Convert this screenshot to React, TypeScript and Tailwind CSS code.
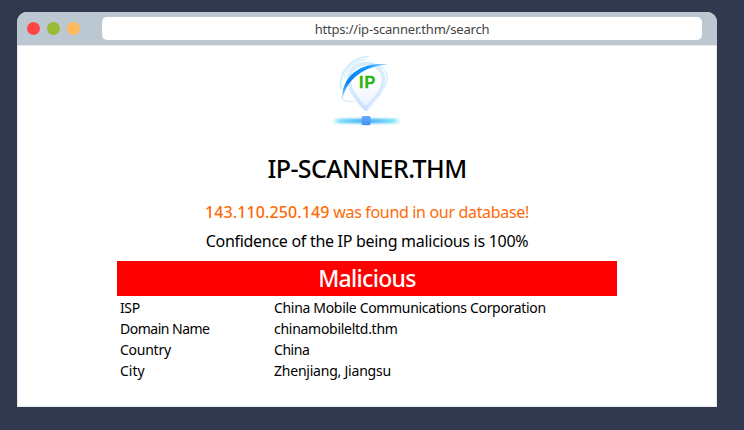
import React from 'react';

type Detail = { label: string; value: string; labelTracking: string; valueTracking: string };

const details: Detail[] = [
  { label: 'ISP', value: 'China Mobile Communications Corporation', labelTracking: 'tracking-[-0.4px]', valueTracking: 'tracking-[-0.32px]' },
  { label: 'Domain Name', value: 'chinamobileltd.thm', labelTracking: 'tracking-[-0.5px]', valueTracking: 'tracking-[-0.28px]' },
  { label: 'Country', value: 'China', labelTracking: 'tracking-[-0.25px]', valueTracking: 'tracking-[-0.45px]' },
  { label: 'City', value: 'Zhenjiang, Jiangsu', labelTracking: '', valueTracking: 'tracking-[-0.22px]' },
];

function ScannerLogo() {
  return (
    <svg className="mr-[2px]" width="92" height="84" viewBox="0 0 92 84" role="img" aria-label="IP scanner">
      <defs>
        <linearGradient id="pin" x1="0" y1="0" x2="0" y2="1">
          <stop offset="0.4" stopColor="#ffffff" />
          <stop offset="1" stopColor="#e8f0ff" />
        </linearGradient>
        <linearGradient id="pinEdge" x1="0" y1="0" x2="0" y2="1">
          <stop offset="0" stopColor="#d8edfb" />
          <stop offset="0.6" stopColor="#d9ebfd" />
          <stop offset="1" stopColor="#cbe0ff" />
        </linearGradient>
        <linearGradient id="orbit" x1="0" y1="1" x2="1" y2="0">
          <stop offset="0" stopColor="#7cccff" />
          <stop offset="0.3" stopColor="#0a80f5" />
          <stop offset="0.75" stopColor="#159cff" />
          <stop offset="1" stopColor="#9bd9ff" />
        </linearGradient>
        <linearGradient id="cable" x1="0" y1="0" x2="1" y2="0">
          <stop offset="0" stopColor="#7ce0ff" stopOpacity="0" />
          <stop offset="0.13" stopColor="#7edcfb" />
          <stop offset="0.4" stopColor="#5abcf5" />
          <stop offset="0.6" stopColor="#5abcf5" />
          <stop offset="0.87" stopColor="#7ee4fb" />
          <stop offset="1" stopColor="#7ce0ff" stopOpacity="0" />
        </linearGradient>
        <linearGradient id="node" x1="0" y1="0" x2="0" y2="1">
          <stop offset="0" stopColor="#64adfb" />
          <stop offset="1" stopColor="#3f90f0" />
        </linearGradient>
      </defs>
      <path d="M21 41C18 25 31 9 49 8.3" fill="none" stroke="#c3eaff" strokeWidth="1.5" />
      <path d="M24 30C27 18 37 12 46 11" fill="none" stroke="#d5f1ff" strokeWidth="1.3" />
      <path d="M22 48C22 53 27 54.5 35 53" fill="none" stroke="#d3edff" strokeWidth="1.2" />
      <path d="M60 18C68 22 69.5 31 64 40" fill="none" stroke="#cfeeff" strokeWidth="1.2" />
      <path d="M46 61C40 55 29 43 29 32C29 22 36.5 15.5 46 15.5C55.5 15.5 63.5 22 63.5 32C63.5 43 52 55 46 61Z" fill="url(#pin)" stroke="url(#pinEdge)" strokeWidth="4" strokeLinejoin="round" />
      <path d="M48 60.5L58 49" fill="none" stroke="#ffffff" strokeWidth="1" />
      <path d="M22.5 50C21 32 38 12.5 68.5 16.7C45 17 27 31 22.5 50Z" fill="url(#orbit)" />
      <text x="39" y="40" fontFamily="Liberation Sans, sans-serif" fontSize="16" fontWeight="700" letterSpacing="1" fill="#2ab40c" stroke="#2ab40c" strokeWidth=".3">IP</text>
      <rect x="12" y="69.5" width="69" height="7" fill="url(#cable)" opacity=".45" />
      <rect x="13" y="71.2" width="67" height="3.6" fill="url(#cable)" />
      <rect x="41.5" y="68" width="9.2" height="9.2" rx="2" fill="url(#node)" />
    </svg>
  );
}

export default function App() {
  return (
    <div className="h-[430px] w-[744px] bg-[#31394e] pt-3 pl-[17px] font-['Noto_Sans','Open_Sans',sans-serif] text-black">
      <div className="flex h-[395px] w-[700px] flex-col overflow-hidden rounded-t-[10px] bg-white">
        <header className="flex h-[33px] shrink-0 items-center bg-[#bbc7d1] pl-[10px]">
          <div className="flex gap-[7px]">
            <span className="size-[13px] rounded-full bg-[#ff4646]" />
            <span className="size-[13px] rounded-full bg-[#99bb33]" />
            <span className="size-[13px] rounded-full bg-[#ffbb5a]" />
          </div>
          <div className="ml-[22px] flex h-[23px] w-[600px] items-center justify-center rounded-[5px] bg-white pt-[2px] text-[13px] text-[#444]">
            <span className="tracking-[-0.19px]">https://ip-scanner.thm/search</span>
          </div>
        </header>
        <main className="flex flex-1 flex-col items-center border border-[#e6e9eb] pt-[2px]">
          <ScannerLogo />
          <h1 className="mt-[19px] h-[34px] text-[25px] leading-[34px] font-medium tracking-[-0.6px] whitespace-nowrap">IP-SCANNER.THM</h1>
          <p className="mt-[15px] h-6 text-[16px] leading-6 whitespace-nowrap text-[#ff6a06]">
            <span className="font-medium tracking-[0.1px]">143.110.250.149</span><span className="tracking-[-0.33px]"> was found in our database!</span>
          </p>
          <p className="mt-[5px] h-6 text-[16px] leading-6 tracking-[-0.29px] whitespace-nowrap">Confidence of the IP being malicious is 100%</p>
          <section className="mt-2 w-[500px]">
            <h2 className="h-[35px] bg-[#ff0000] text-center text-[23px] leading-[34px] font-medium tracking-[-0.68px] text-white">Malicious</h2>
            <dl className="mt-px text-[14px] leading-[21px]">
              {details.map((d) => (
                <div key={d.label} className="flex h-[21px] pl-[3px] whitespace-nowrap">
                  <dt className="w-[154px]"><span className={d.labelTracking}>{d.label}</span></dt>
                  <dd><span className={d.valueTracking}>{d.value}</span></dd>
                </div>
              ))}
            </dl>
          </section>
        </main>
      </div>
    </div>
  );
}
